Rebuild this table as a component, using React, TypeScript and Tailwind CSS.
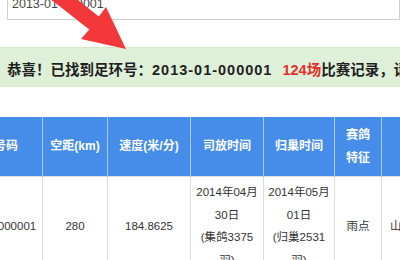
import React from "react";

const font = "font-['Liberation_Sans','Noto_Sans_CJK_SC',sans-serif]";

function Arrow() {
    return (
        <svg className="pointer-events-none absolute left-0 top-0" width="140" height="60" viewBox="0 0 140 60">
            <polygon
                points="126,49 106,7 98.8,16.6 59,-15 49,-2 89.3,29.6 81,39"
                fill="#f2383a"
            />
        </svg>
    );
}

export default function App() {
    const cols = [97, 65, 83, 73, 71, 47, 100];

    return (
        <div className={`relative h-[260px] w-[400px] overflow-hidden bg-white ${font}`}>
            {/* search input, cut off at the top */}
            <div className="-mt-[10px] ml-[7px] flex h-[30px] items-end border border-[#cfcfcf] pb-[8px] pl-[4px] text-[12.5px] leading-[14px] text-[#444]">
                2013-01-000001
            </div>

            {/* result banner */}
            <div className="mt-[27px] h-[40px] whitespace-nowrap border-y border-[#d6e9c6] bg-[#dff0d8] pl-[7px] pt-[11px] text-[14.5px] font-bold leading-[22px] text-[#1f1f1f]">
                恭喜！已找到足环号：<span className="tracking-[1px]">2013-01-000001</span>
                <span className="ml-[10px] text-[#e5302b]">124场</span>比赛记录，请查看
            </div>

            {/* result table */}
            <div className="mt-[30px]">
                <table className="-ml-[55px] w-[536px] table-fixed border-collapse text-center text-[11.5px] leading-[22.5px]">
                    <colgroup>
                        {cols.map((w, i) => (
                            <col key={i} style={{ width: w }} />
                        ))}
                    </colgroup>
                    <thead>
                        <tr className="bg-[#468de9] text-[12px] font-bold text-white">
                            <th className="border-x border-[#a9c9f3] px-1 py-[7px]">足环号码</th>
                            <th className="border-x border-[#a9c9f3] px-1 py-[7px]">空距(km)</th>
                            <th className="border-x border-[#a9c9f3] px-1 py-[7px]">速度(米/分)</th>
                            <th className="border-x border-[#a9c9f3] px-1 py-[7px]">司放时间</th>
                            <th className="border-x border-[#a9c9f3] px-1 py-[7px]">归巢时间</th>
                            <th className="border-x border-[#a9c9f3] px-2 py-[7px]">赛鸽特征</th>
                            <th className="border-x border-[#a9c9f3] px-1 py-[7px]">&nbsp;</th>
                        </tr>
                    </thead>
                    <tbody className="text-[#333]">
                        <tr>
                            <td className="border border-[#dcdcdc] px-1 py-[4px]">2013-01-000001</td>
                            <td className="border border-[#dcdcdc] px-1">280</td>
                            <td className="border border-[#dcdcdc] px-1">184.8625</td>
                            <td className="border border-[#dcdcdc] px-[4px] py-[4px]">
                                2014年04月30日
                                <br />
                                (集鸽3375羽)
                            </td>
                            <td className="border border-[#dcdcdc] px-[4px] py-[4px]">
                                2014年05月01日
                                <br />
                                (归巢2531羽)
                            </td>
                            <td className="border border-[#dcdcdc] px-2">雨点</td>
                            <td className="border border-[#dcdcdc] pl-[8px] text-left">山东</td>
                        </tr>
                    </tbody>
                </table>
            </div>

            <Arrow />
        </div>
    );
}
